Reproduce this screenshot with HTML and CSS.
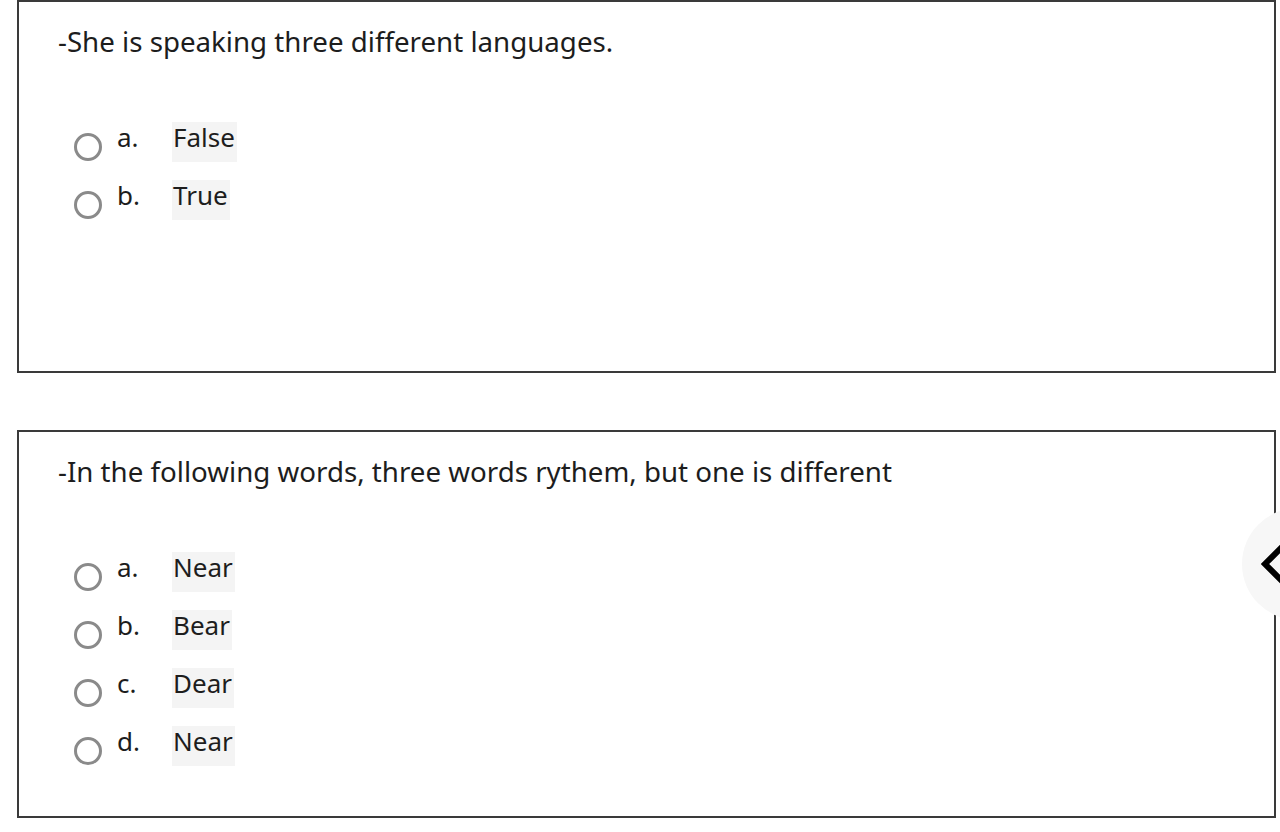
FILE: index.html
```html
<!DOCTYPE html>
<html lang="en">
<head>
<meta charset="utf-8">
<title>Quiz</title>
<link rel="stylesheet" href="styles.css">
</head>
<body>
<main class="page">
  <section class="card card-first">
    <p class="question">-She is speaking three different languages.</p>
    <div class="answers">
      <label class="option"><span class="radio"></span><span class="letter">a.</span><span class="text">False</span></label>
      <label class="option"><span class="radio"></span><span class="letter">b.</span><span class="text">True</span></label>
    </div>
  </section>
  <section class="card card-second">
    <p class="question">-In the following words, three words rythem, but one is different</p>
    <div class="answers">
      <label class="option"><span class="radio"></span><span class="letter">a.</span><span class="text">Near</span></label>
      <label class="option"><span class="radio"></span><span class="letter">b.</span><span class="text">Bear</span></label>
      <label class="option"><span class="radio"></span><span class="letter">c.</span><span class="text">Dear</span></label>
      <label class="option"><span class="radio"></span><span class="letter">d.</span><span class="text">Near</span></label>
    </div>
  </section>
</main>
<div class="drawer-edge">
  <button class="drawer-toggle" aria-label="Open drawer">
    <svg width="24" height="44" viewBox="0 0 24 44"><path d="M24 2 L4 22 L24 42" fill="none" stroke="#000" stroke-width="6" stroke-linejoin="miter"/></svg>
  </button>
</div>
</body>
</html>
```
FILE: styles.css
```css
html, body {
  margin: 0;
  padding: 0;
  background: #fff;
}
body {
  font-family: "Noto Sans", "Open Sans", sans-serif;
  color: #1d1d1d;
  overflow: hidden;
  width: 1280px;
  height: 832px;
  position: relative;
}
.page {
  display: flex;
  flex-direction: column;
  gap: 57px;
  padding-left: 17px;
  padding-right: 4px;
}
.card {
  border: 2px solid #3a3a3a;
  box-sizing: border-box;
  padding: 0 0 0 39px;
}
.card-first {
  height: 373px;
}
.card-second {
  height: 388px;
}
.question {
  margin: 0;
  font-size: 27.7px;
  line-height: 36px;
  padding-top: 21px;
}
.answers {
  display: flex;
  flex-direction: column;
  gap: 18px;
  padding-left: 16px;
  margin-top: 63px;
}
.option {
  display: flex;
  align-items: flex-start;
  height: 40px;
}
.radio {
  width: 22px;
  height: 22px;
  border: 3px solid #8a8a8a;
  border-radius: 50%;
  margin-top: 11px;
  flex: none;
}
.letter {
  font-size: 26px;
  line-height: 30px;
  padding-bottom: 10px;
  width: 55px;
  margin-left: 15px;
  flex: none;
}
.text {
  font-size: 26px;
  line-height: 30px;
  padding: 0 2px 10px 1px;
  background: #f4f4f4;
}
.drawer-edge {
  position: absolute;
  left: 1242px;
  top: 508px;
  width: 38px;
  height: 112px;
  overflow: hidden;
}
.drawer-toggle {
  width: 112px;
  height: 112px;
  border-radius: 50%;
  border: none;
  background: #f7f7f7;
  padding: 0 0 0 19px;
  display: flex;
  align-items: center;
  justify-content: flex-start;
}
.drawer-toggle svg { display: block; }
```
